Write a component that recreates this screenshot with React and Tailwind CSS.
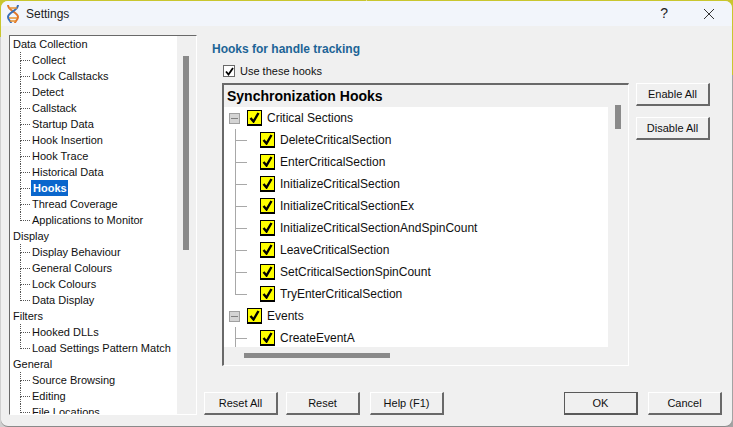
import React from 'react';

const sections = [
  { title: 'Data Collection', items: ['Collect', 'Lock Callstacks', 'Detect', 'Callstack', 'Startup Data', 'Hook Insertion', 'Hook Trace', 'Historical Data', 'Hooks', 'Thread Coverage', 'Applications to Monitor'] },
  { title: 'Display', items: ['Display Behaviour', 'General Colours', 'Lock Colours', 'Data Display'] },
  { title: 'Filters', items: ['Hooked DLLs', 'Load Settings Pattern Match'] },
  { title: 'General', items: ['Source Browsing', 'Editing', 'File Locations'] },
];

const criticalHooks = [
  'DeleteCriticalSection',
  'EnterCriticalSection',
  'InitializeCriticalSection',
  'InitializeCriticalSectionEx',
  'InitializeCriticalSectionAndSpinCount',
  'LeaveCriticalSection',
  'SetCriticalSectionSpinCount',
  'TryEnterCriticalSection',
];

const DnaIcon = () => (
  <svg width="14" height="20" viewBox="0 0 14 20" className="shrink-0">
    <path d="M2 1 C2 7 12 8 12 13 C12 16 9 17 9 19" fill="none" stroke="#e0752a" strokeWidth="2" />
    <path d="M12 1 C12 7 2 8 2 13 C2 16 5 17 5 19" fill="none" stroke="#3b6fb5" strokeWidth="2" />
    <path d="M3 4 H11 M3 14 H11 M4 17 H10" stroke="#e8912f" strokeWidth="1.5" />
  </svg>
);

const Btn = ({ children, isDefault }) => (
  <button
    className={
      'w-[74px] h-[23px] bg-[#f0f0f0] text-[11px] text-[#101010] shrink-0 ' +
      (isDefault
        ? 'border border-[#5a5a5a] border-b-2 border-r-2'
        : 'border border-t-white border-l-white border-r-[#696969] border-b-[#696969] border-b-2 border-r-2')
    }
  >
    {children}
  </button>
);

const YellowCheck = () => (
  <span className="w-[15px] h-[16px] bg-[#ffff00] border border-black border-b-2 shrink-0 flex items-center justify-center">
    <svg width="11" height="11" viewBox="0 0 11 11">
      <path d="M1.5 6 L4.5 9.5 L9.5 1" fill="none" stroke="#000" strokeWidth="2.4" />
    </svg>
  </span>
);

const Connector = ({ last, dotted }) => {
  const style = dotted ? 'border-dotted border-[#555]' : 'border-[#a8a8a8]';
  return (
    <span className="flex flex-col self-stretch shrink-0">
      <span className={'flex-1 border-l border-b ' + style + (dotted ? ' w-[10px]' : ' w-[12px]')} />
      <span className={'flex-1 ' + (last ? '' : 'border-l ' + style)} />
    </span>
  );
};

const NavTree = () => (
  <div className="w-[167px] bg-white overflow-hidden whitespace-nowrap text-[11px]">
    {sections.map((s) => (
      <div key={s.title}>
        <div className="h-4 leading-4 pl-[3px]">{s.title}</div>
        {s.items.map((item, i) => (
          <div key={item} className="h-4 flex pl-[10px]">
            <Connector dotted last={i === s.items.length - 1} />
            <span className={item === 'Hooks' ? 'ml-[1px] pl-[2px] pr-[1px] bg-[#0a66cc] text-white font-bold leading-4' : 'ml-[2px] leading-4'}>{item}</span>
          </div>
        ))}
      </div>
    ))}
  </div>
);

const HookGroup = ({ title, items, closed }) => (
  <div>
    <div className="h-[22px] flex items-center pl-[5px]">
      <span className="w-[11px] h-[11px] bg-[#d4d4d4] border border-[#a0a0a0] flex items-center justify-center shrink-0 mr-[7px]">
        <span className="w-[7px] h-px bg-[#808080]" />
      </span>
      <YellowCheck />
      <span className="ml-[5px]">{title}</span>
    </div>
    {items.map((h, i) => (
      <div key={h} className="h-[22px] flex items-center pl-[11px]">
        <Connector last={closed && i === items.length - 1} />
        <span className="ml-[13px] flex items-center">
          <YellowCheck />
          <span className="ml-[5px]">{h}</span>
        </span>
      </div>
    ))}
  </div>
);

export default function App() {
  return (
    <div className="w-[733px] h-[427px] [background:linear-gradient(#c9c62e_0,#c9c62e_37px,#d0d0d0_37px)_left/50%_100%_no-repeat,linear-gradient(#c9c62e_0,#c9c62e_75px,#a3a3a3_75px)_right/50%_100%_no-repeat] overflow-hidden font-['Liberation_Sans',sans-serif] text-[12px] text-[#101010]">
      <div className="h-[426px] ml-[1px] mr-[1px] mt-[1px] rounded-t-[7px] rounded-b-[7px] bg-[#f0f0f0] border-b border-[#8a8a8a] flex flex-col overflow-hidden">
        <div className="h-[25px] bg-[#f2f5fb] flex items-center pl-[5px] shrink-0">
          <DnaIcon />
          <span className="ml-[6px] text-[12px] text-[#222]">Settings</span>
          <span className="ml-auto text-[14px] text-[#222] mr-[35px]">?</span>
          <svg width="12" height="12" viewBox="0 0 12 12" className="mr-[17px]">
            <path d="M1 1 L11 11 M11 1 L1 11" stroke="#333" strokeWidth="1" />
          </svg>
        </div>

        <div className="flex flex-1 pt-[9px] pl-[8px] min-h-0">
          <div className="w-[188px] h-[380px] flex border border-t-[#696969] border-l-[#696969] border-r-white border-b-white overflow-hidden shrink-0">
            <NavTree />
            <div className="flex-1 pt-[20px] pl-[6px]">
              <div className="w-[6px] h-[194px] bg-[#8a8a8a]" />
            </div>
          </div>

          <div className="flex flex-col ml-[8px] flex-1 min-w-0">
            <div className="pl-[7px] pt-[7px] text-[#1d6496] font-bold leading-[14px]">Hooks for handle tracking</div>
            <div className="flex items-center pl-[18px] mt-[8px] h-[14px]">
              <span className="w-[12px] h-[12px] bg-white border border-[#696969] flex items-center justify-center">
                <svg width="9" height="9" viewBox="0 0 9 9">
                  <path d="M1 4.5 L3.5 7.5 L8 1" fill="none" stroke="#000" strokeWidth="1.8" />
                </svg>
              </span>
              <span className="ml-[5px] text-[11px]">Use these hooks</span>
            </div>

            <div className="flex mt-[5px] pl-[17px]">
              <div className="w-[407px] h-[283px] flex flex-col border-2 border-t-[#696969] border-l-[#696969] border-r-white border-b-white border-r border-b shrink-0">
                <div className="flex flex-1 min-h-0">
                  <div className="w-[384px] flex flex-col min-h-0">
                    <div className="h-[22px] leading-[23px] pl-[3px] text-[14px] font-bold text-black shrink-0 whitespace-nowrap">Synchronization Hooks</div>
                    <div className="flex-1 bg-white overflow-hidden whitespace-nowrap">
                      <HookGroup title="Critical Sections" items={criticalHooks} closed />
                      <HookGroup title="Events" items={['CreateEventA']} />
                    </div>
                  </div>
                  <div className="flex-1 pt-[20px] pl-[7px]">
                    <div className="w-[6px] h-[24px] bg-[#8a8a8a]" />
                  </div>
                </div>
                <div className="h-[18px] pl-[20px] pt-[6px] shrink-0">
                  <div className="w-[146px] h-[5px] bg-[#8a8a8a]" />
                </div>
              </div>
              <div className="flex flex-col gap-[11px] ml-[7px]">
                <Btn>Enable All</Btn>
                <Btn>Disable All</Btn>
              </div>
            </div>

            <div className="flex mt-[26px] -ml-[1px]">
              <Btn>Reset All</Btn>
              <span className="w-[8px]" />
              <Btn>Reset</Btn>
              <span className="w-[10px]" />
              <Btn>Help (F1)</Btn>
              <span className="w-[120px]" />
              <Btn isDefault>OK</Btn>
              <span className="w-[10px]" />
              <Btn>Cancel</Btn>
            </div>
          </div>
        </div>
      </div>
    </div>
  );
}
